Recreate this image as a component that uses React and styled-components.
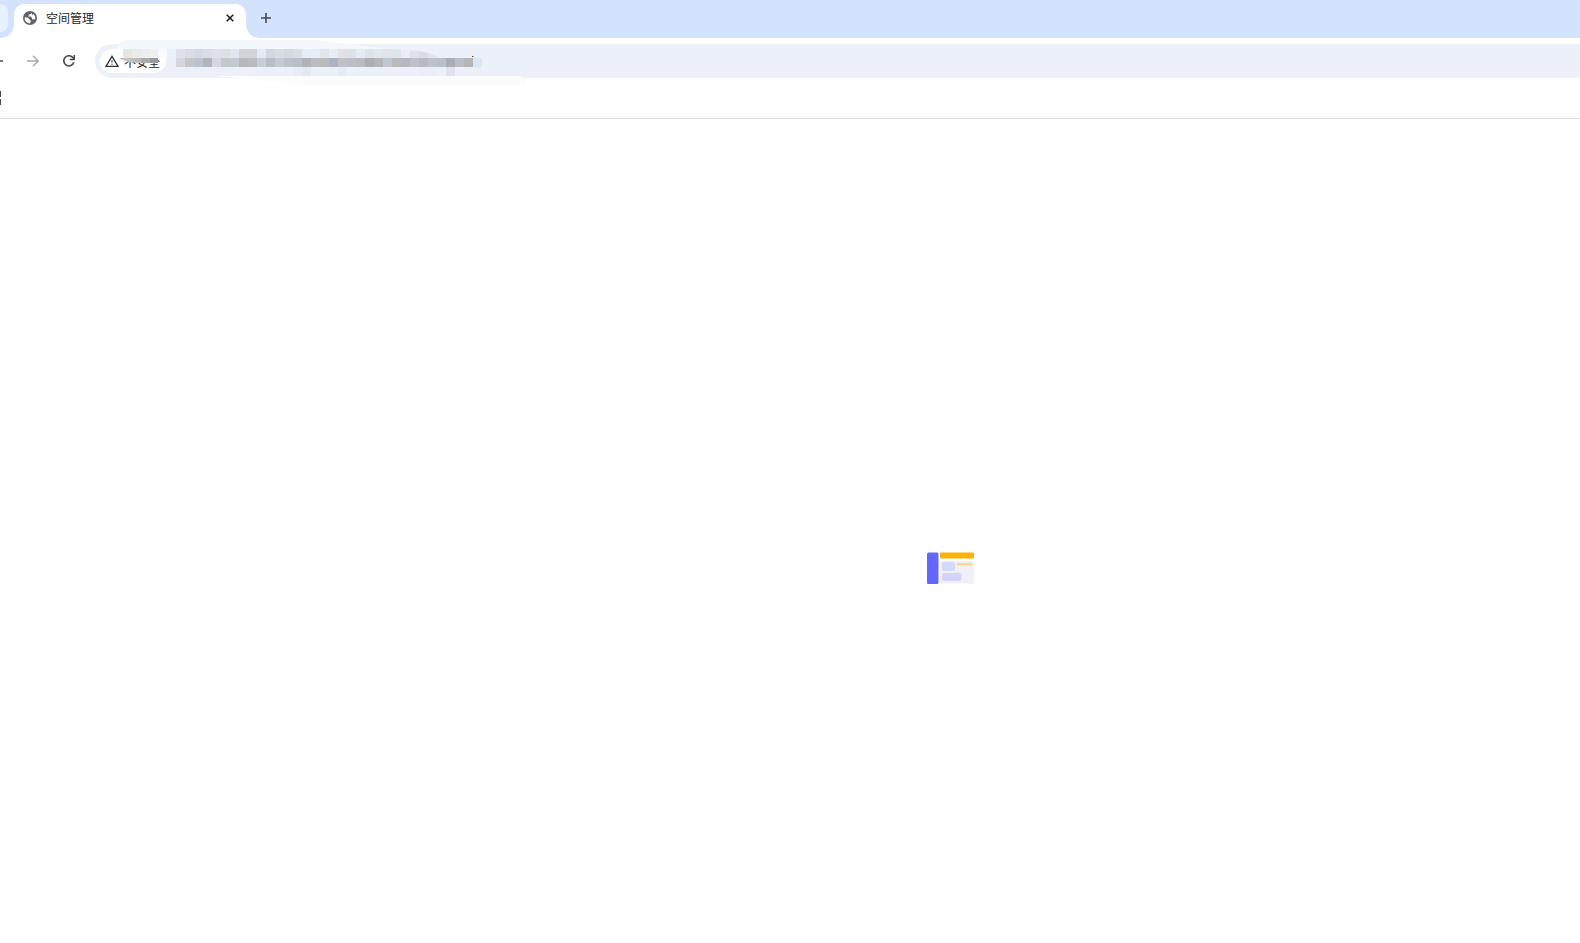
import React from 'react';
import styled, { createGlobalStyle } from 'styled-components';

const stripBlue = '#d3e3fd';
const fieldBlue = '#ebf0f9';
const iconGray = '#474747';
const textColor = '#1f1f1f';

const GlobalStyle = createGlobalStyle`
  body {
    margin: 0;
    background: #fff;
    color: ${textColor};
    font-family: "Liberation Sans", "Noto Sans CJK SC", sans-serif;
    font-size: 12px;
    overflow-x: hidden;
  }

  button, input {
    font: inherit;
    color: inherit;
  }
`;

const Window = styled.div`
  display: flex;
  flex-direction: column;
  min-height: 100vh;
`;

const TabStrip = styled.div`
  display: flex;
  box-sizing: border-box;
  height: 38px;
  padding-top: 4px;
  background: ${stripBlue};
`;

const PreviousTab = styled.div`
  width: 8px;
  height: 28px;
  margin-right: 6px;
  border-radius: 0 8px 8px 0;
  background: #e8f0fe;
`;

const Tab = styled.div`
  position: relative;
  display: flex;
  align-items: center;
  box-sizing: border-box;
  width: 232px;
  padding: 0 12px 6px 9px;
  border-radius: 10px 10px 0 0;
  background: #fff;

  &::before,
  &::after {
    content: '';
    position: absolute;
    bottom: 0;
    width: 12px;
    height: 12px;
  }

  &::before {
    right: 100%;
    background: radial-gradient(circle at 0 0, transparent 11px, #fff 12px);
  }

  &::after {
    left: 100%;
    background: radial-gradient(circle at 100% 0, transparent 11px, #fff 12px);
  }
`;

const TabTitle = styled.span`
  flex: 1;
  margin-left: 9px;
  padding-top: 2px;
  line-height: 16px;
`;

const IconButton = styled.button`
  display: flex;
  align-items: center;
  justify-content: center;
  width: ${props => props.$width}px;
  height: ${props => props.$height}px;
  padding: 0;
  border: 0;
  background: none;
  color: ${props => props.$color || iconGray};

  svg {
    display: block;
  }
`;

const NewTab = styled(IconButton)`
  margin-left: 10px;
`;

const Toolbar = styled.div`
  position: relative;
  display: flex;
  align-items: center;
  padding: 6px 0;
`;

const Navigation = styled.nav`
  display: flex;
  margin: 0 8px 0 -21px;
`;

const AddressBar = styled.div`
  display: flex;
  flex: 1;
  align-items: center;
  height: 34px;
  padding-left: 5px;
  border-radius: 17px 0 0 17px;
  background: ${fieldBlue};
`;

const SecurityChip = styled.button`
  display: flex;
  align-items: center;
  gap: 5px;
  height: 24px;
  padding: 0 6px 0 5px;
  border: 0;
  border-radius: 12px;
  background: #fff;
  white-space: nowrap;
`;

const AddressInput = styled.input`
  flex: 1;
  min-width: 0;
  height: 24px;
  padding: 0 8px;
  border: 0;
  outline: 0;
  background: transparent;
`;

const RedactionLayer = styled.svg`
  position: absolute;
  top: 0;
  left: 114px;
  pointer-events: none;
`;

const BookmarksBar = styled.div`
  display: flex;
  align-items: center;
  height: 28px;
  padding-bottom: 6px;
  border-bottom: 1px solid #dfe1e4;
`;

const AppsButton = styled(IconButton)`
  margin-left: -13px;
`;

const Page = styled.main`
  display: flex;
  flex: 1;
  align-items: center;
  justify-content: center;
  padding: 74px 0 0 322px;
`;

const TOP_CELLS = [
  '#dde1e9', '#d9dde6', '#d2dae5', '#d9dee8', '#dde1ea', '#dbdfe7', '#e1e5f0',
  '#cfd3da', '#cfd3da', '#e4e9f4', '#d3d7df', '#d8dce5', '#d4d8e0', '#d9dde6',
  '#e6edf7', '#e8eef8', '#e0e5ee', '#e6edf6', '#dfe2e7', '#dbe2ec', '#e6ecf7',
  '#dde2eb', '#e2e6ef', '#e0e3ea', '#dfe3ea', '#e8edf7', '#dde1e9', '#d9dce3',
  '#e1e5ee', '#e7ecf5',
];

const MIDDLE_CELLS = [
  '#d2d7df', '#c6c6c8', '#bcc3cf', '#b1b5be', '#d2d7e0', '#c5c7cb', '#c4cad2',
  '#b5b9c2', '#b8bbc0', '#c8ccd6', '#b9bdc7', '#c6cad2', '#bcc1cb', '#b9bec8',
  '#b1b3b8', '#bbbdc2', '#bbbbbe', '#adb4c0', '#c1c1c5', '#bbbfc9', '#bbbcc1',
  '#adaeb3', '#b5b6ba', '#c0c7d3', '#b9babe', '#b6b8c1', '#bdc1cb', '#b6b9c0',
  '#bcc1cb', '#bbbfc9', '#aaadb7', '#b9bdc6', '#b6b5b6', '#d9e6f4',
];

const BOTTOM_CELLS = {
  13: '#e7ecf6',
  14: '#e3e8f2',
  18: '#e6ebf5',
  27: '#e9eef7',
  28: '#e9eef7',
  30: '#dee3ec',
};

const CHIP_CELLS = [
  ['#e6e5e2', '#c5c3bf'],
  ['#ebebea', '#bdbbb7'],
  ['#eeeeee', '#aaaaaa'],
  ['#f0f0ee', '#999999'],
];

const CELL = 9;

const Cell = ({ column, y, color, left = 62 }) => (
  <rect x={left + column * CELL} y={y} width={CELL} height={CELL} fill={color} />
);

const Redaction = () => (
  <RedactionLayer width="412" height="48" aria-hidden="true" shapeRendering="crispEdges">
    <defs>
      <clipPath id="sweep">
        <path d="M0 0H190Q215 4 236 6L263 10L306 13Q318 15 324 19L338 20H0Z" />
      </clipPath>
      <clipPath id="chip">
        <path d="M9 11H44V25H28Q15 25 9 22L5 20H9Z" />
      </clipPath>
    </defs>
    <g clipPath="url(#sweep)">
      <path d="M2 11Q4 2 14 2H338V11Z" fill="#f4f7fc" shapeRendering="auto" />
      {TOP_CELLS.map((color, i) => (
        <Cell key={`top-${i}`} column={i} y={11} color={color} />
      ))}
    </g>
    {MIDDLE_CELLS.map((color, i) => (
      <Cell key={`middle-${i}`} column={i} y={20} color={color} />
    ))}
    {Object.keys(BOTTOM_CELLS).map(i => (
      <Cell key={`bottom-${i}`} column={Number(i)} y={29} color={BOTTOM_CELLS[i]} />
    ))}
    <rect x="44" y="11" width="9" height="9" fill="#fafbfd" />
    <g clipPath="url(#chip)">
      <rect x="4" y="20" width="6" height="3" fill="#b5b3af" />
      {CHIP_CELLS.map(([top, bottom], i) => (
        <React.Fragment key={top}>
          <Cell left={9} column={i} y={11} color={top} />
          <Cell left={9} column={i} y={20} color={bottom} />
        </React.Fragment>
      ))}
    </g>
    <path
      d="M105 38H404Q411 38 411 42V47H190Q170 46 150 43Q130 39 105 39Z"
      fill="#fbfcfe"
      shapeRendering="auto"
    />
    <rect x="358" y="18" width="1" height="1" fill="#6e3b33" />
    <rect x="359" y="18" width="1" height="1" fill="#8aa9cf" />
  </RedactionLayer>
);

const GlobeIcon = () => (
  <svg width="14" height="14" viewBox="0 0 14 14" aria-hidden="true">
    <circle cx="7" cy="7" r="7" fill="#5f6368" />
    <path
      d="M1.6 6.6H4.6L6.8 8.4V9.6H7.8V11L6.6 12.4A5.4 5.4 0 0 1 1.6 6.6Z"
      fill="#fff"
    />
    <path
      d="M8.4 1.7L7.8 3H6.4V4.4H5.2V5.6H7.8L9 7V8.2H11L12 8.6A5.4 5.4 0 0 0 10.4 3L9.2 4Z"
      fill="#fff"
    />
  </svg>
);

const CloseIcon = () => (
  <svg width="8" height="8" viewBox="0 0 8 8" aria-hidden="true">
    <path d="M0.7 0.7L7.3 7.3M7.3 0.7L0.7 7.3" stroke={textColor} strokeWidth="1.6" />
  </svg>
);

const PlusIcon = () => (
  <svg width="10" height="10" viewBox="0 0 10 10" aria-hidden="true">
    <path d="M5 0V10M0 5H10" stroke="currentColor" strokeWidth="1.6" />
  </svg>
);

const ArrowIcon = ({ back }) => (
  <svg width="12" height="12" viewBox="0 0 12 12" fill="none" aria-hidden="true">
    <path
      d={back ? 'M12 6H1M6 0.7L0.9 6L6 11.3' : 'M0 6H11M6 0.7L11.1 6L6 11.3'}
      stroke="currentColor"
      strokeWidth="1.5"
    />
  </svg>
);

const ReloadIcon = () => (
  <svg width="12" height="12" viewBox="0 0 12 12" fill="none" aria-hidden="true">
    <path d="M10.8 7.3A5.1 5.1 0 1 1 10 2.8L11 4" stroke="currentColor" strokeWidth="1.6" />
    <path d="M11.3 0V4.5H6.8" stroke="currentColor" strokeWidth="1.5" />
  </svg>
);

const WarningIcon = () => (
  <svg width="14" height="12" viewBox="0 0 14 12" fill="none" aria-hidden="true">
    <path d="M7 1.3L13 11.3H1Z" stroke="#333" strokeWidth="1.3" />
    <path d="M7 4.8V8M7 8.8V10" stroke="#555" strokeWidth="1" />
  </svg>
);

const AppsIcon = () => (
  <svg width="14" height="14" viewBox="0 0 14 14" fill="none" aria-hidden="true">
    <path
      d="M0.75 0.75H5.25V5.25H0.75ZM8.75 0.75H13.25V5.25H8.75ZM0.75 8.75H5.25V13.25H0.75ZM8.75 8.75H13.25V13.25H8.75Z"
      stroke="currentColor"
      strokeWidth="1.5"
    />
  </svg>
);

const LoadingLogo = () => (
  <svg width="48" height="32" viewBox="0 0 48 32" role="img" aria-label="空间管理">
    <rect x="0" y="0.5" width="11.5" height="31.5" rx="1.5" fill="#6366ff" />
    <rect x="13" y="0.5" width="34" height="6" rx="1" fill="#fcb103" />
    <rect x="13" y="9" width="34" height="22.5" rx="1.5" fill="#f0f1f8" />
    <rect x="15" y="10" width="13" height="9" rx="2" fill="#d3d7f9" />
    <rect x="29.5" y="11" width="16" height="2.5" rx="1" fill="#ffd980" />
    <rect x="15" y="21" width="19.5" height="8" rx="2" fill="#d5d3fa" />
  </svg>
);

const App = () => (
  <>
    <GlobalStyle />
    <Window>
      <TabStrip>
        <PreviousTab />
        <Tab>
          <GlobeIcon />
          <TabTitle>空间管理</TabTitle>
          <IconButton $width={8} $height={16} aria-label="关闭">
            <CloseIcon />
          </IconButton>
        </Tab>
        <NewTab $width={20} $height={28} aria-label="新标签页">
          <PlusIcon />
        </NewTab>
      </TabStrip>
      <Toolbar>
        <Navigation>
          <IconButton $width={36} $height={34} aria-label="后退">
            <ArrowIcon back />
          </IconButton>
          <IconButton $width={36} $height={34} $color="#ababab" aria-label="前进">
            <ArrowIcon />
          </IconButton>
          <IconButton $width={36} $height={34} aria-label="重新加载">
            <ReloadIcon />
          </IconButton>
        </Navigation>
        <AddressBar>
          <SecurityChip>
            <WarningIcon />
            不安全
          </SecurityChip>
          <AddressInput type="text" aria-label="地址" />
        </AddressBar>
        <Redaction />
      </Toolbar>
      <BookmarksBar>
        <AppsButton $width={14} $height={14} aria-label="应用">
          <AppsIcon />
        </AppsButton>
      </BookmarksBar>
      <Page>
        <LoadingLogo />
      </Page>
    </Window>
  </>
);

export default App;
